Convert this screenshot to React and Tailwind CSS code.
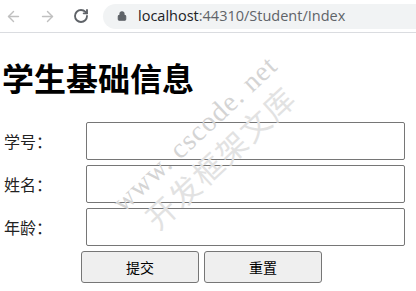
import { ArrowLeft, ArrowRight, RotateCw, Lock } from "lucide-react";

const fields = ["学号：", "姓名：", "年龄："];

const BrowserBar = () => (
    <div className="h-[33px] flex items-center bg-white border-b border-[#dadce0]">
        <ArrowLeft size={17} strokeWidth={2} className="ml-[5px] text-[#c0c0c0]" />
        <ArrowRight size={17} strokeWidth={2} className="ml-[17px] text-[#c0c0c0]" />
        <RotateCw size={16} strokeWidth={2.8} className="ml-[17px] text-[#5f6368]" />
        <div className="ml-[14px] flex-1 h-[25px] rounded-l-full bg-[#f1f3f4] flex items-center pl-[14px]">
            <Lock size={10} fill="#5f6368" strokeWidth={2.5} className="text-[#5f6368]" />
            <span className="ml-[11px] text-[14.5px] font-['Open_Sans',sans-serif] text-[#202124]">
                localhost<span className="text-[#5f6368]">:44310/Student/Index</span>
            </span>
        </div>
    </div>
);

export default function App() {
    return (
        <div className="relative w-[416px] h-[291px] overflow-hidden bg-white font-['Noto_Sans_CJK_SC',sans-serif]">
            <BrowserBar />
            <div className="pt-[24px]">
                <h1 className="pl-[2px] text-[32px] leading-[40px] font-bold text-black">学生基础信息</h1>
                <div className="mt-[25px] flex flex-col gap-[5px]">
                    {fields.map(f => (
                        <div key={f} className="flex items-center">
                            <label className="w-[86px] pl-[4px] text-[16px] text-[#222]">{f}</label>
                            <input type="text" className="w-[319px] h-[38px] border border-[#767676] rounded-[2px] bg-white outline-none" />
                        </div>
                    ))}
                    <div className="flex gap-[5px] pl-[81px]">
                        <button className="w-[118px] h-[32px] bg-[#efefef] border border-[#767676] rounded-[3px] text-[14px] text-black">提交</button>
                        <button className="w-[118px] h-[32px] bg-[#efefef] border border-[#767676] rounded-[3px] text-[14px] text-black">重置</button>
                    </div>
                </div>
            </div>
            {/* watermark */}
            <div className="pointer-events-none absolute left-[195px] top-[134px] -translate-x-1/2 -translate-y-1/2 rotate-[-43deg] whitespace-nowrap font-['Liberation_Serif',serif] text-[28px] text-[#d4d4d4] tracking-[1px]">
                www. cscode. net
            </div>
            <div className="pointer-events-none absolute left-[220px] top-[157px] -translate-x-1/2 -translate-y-1/2 rotate-[-43deg] whitespace-nowrap text-[30px] text-[#e2e2e2] tracking-[2px]">
                开发框架文库
            </div>
        </div>
    );
}
